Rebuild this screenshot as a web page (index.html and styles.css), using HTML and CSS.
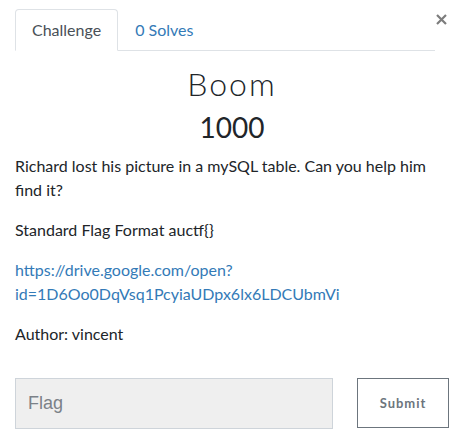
FILE: index.html
```html
<!DOCTYPE html>
<html>
<head>
<meta charset="utf-8">
<link rel="stylesheet" href="styles.css">
</head>
<body>
<div class="modal">
  <div class="head">
    <ul class="tabs">
      <li class="tab active">Challenge</li>
      <li class="tab"><a class="tab-link">0 Solves</a></li>
    </ul>
    <button class="close" aria-label="Close">
      <svg width="11" height="11" viewBox="0 0 11 11"><path d="M1 1 L10 10 M10 1 L1 10" stroke="#7d7d7d" stroke-width="2.2" stroke-linecap="butt"/></svg>
    </button>
  </div>
  <h2 class="name">Boom</h2>
  <h3 class="value">1000</h3>
  <div class="desc">
    <p>Richard lost his picture in a mySQL table. Can you help him find it?</p>
    <p>Standard Flag Format auctf{}</p>
    <p><a class="link">https://drive.google.com/open?<wbr>id=1D6Oo0DqVsq1PcyiaUDpx6lx6LDCUbmVi</a></p>
    <p>Author: vincent</p>
  </div>
  <div class="form">
    <input class="flag" type="text" placeholder="Flag">
    <button class="submit">Submit</button>
  </div>
</div>
</body>
</html>
```
FILE: styles.css
```css
html, body { margin: 0; padding: 0; background: #fff; }
body { font-family: Lato, "Noto Sans", sans-serif; color: #212529; font-size: 16px; line-height: 24px; }
.modal { padding: 9px 21px 0 15px; }
.head { display: flex; align-items: flex-start; }
.tabs { list-style: none; margin: 0; padding: 0; display: flex; width: 420px; border-bottom: 1px solid #dee2e6; }
.tab { padding: 8px 16px; border: 1px solid transparent; border-top-left-radius: 4px; border-top-right-radius: 4px; margin-bottom: -1px; }
.tab.active { color: #495057; border-color: #dee2e6 #dee2e6 #fff; background: #fff; }
.tab-link { color: #337ab7; }
.close { margin-left: auto; margin-right: 2px; margin-top: 5px; padding: 0; border: 0; background: none; display: flex; }
.name { margin: 14px 0 0; text-align: center; font-weight: 300; font-size: 32px; line-height: 38px; letter-spacing: 2px; }
.value { margin: 7px 0 0; text-align: center; font-weight: 400; font-size: 28px; line-height: 34px; }
.desc { margin-top: 10px; }
.desc p { margin: 0 0 16px; }
.link { color: #337ab7; }
.form { display: flex; align-items: flex-start; margin-top: 32px; }
.flag { box-sizing: border-box; width: 318px; height: 51px; border: 1px solid #ced4da; background: #efefef; padding: 0 12px; font-family: "Liberation Sans", Arial, sans-serif; font-size: 18px; color: #495057; outline: none; }
.flag::placeholder { color: #7b8188; }
.submit { box-sizing: border-box; margin-left: 24px; width: 92px; height: 50px; background: #fff; border: 1px solid #6c757d; color: #6c757d; font-family: Lato, sans-serif; font-weight: 700; font-size: 13px; letter-spacing: 1px; }
```
